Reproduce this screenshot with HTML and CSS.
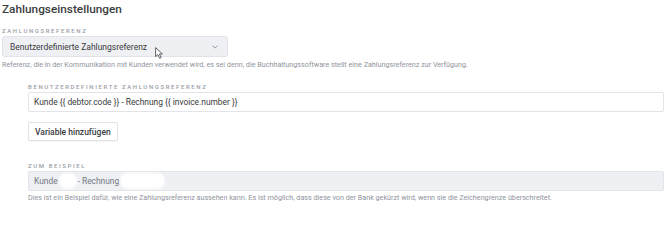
FILE: index.html
```html
<!DOCTYPE html>
<html lang="de">
<head>
<meta charset="utf-8">
<title>Zahlungseinstellungen</title>
<link rel="stylesheet" href="styles.css">
</head>
<body>
<div class="page">
  <h2 class="title">Zahlungseinstellungen</h2>

  <div class="label first">Zahlungsreferenz</div>
  <div class="select">
    <span>Benutzerdefinierte Zahlungsreferenz</span>
    <svg class="chevron" width="6" height="4" viewBox="0 0 6 4"><path d="M0.5 0.6 L3 3.1 L5.5 0.6" fill="none" stroke="#8c9097" stroke-width="0.9"/></svg>
    <svg class="cursor" width="9" height="12" viewBox="0 0 9 12"><path d="M0.6 0.6 L0.6 9.6 L2.8 7.6 L4.6 11.2 L6.1 10.5 L4.4 7 L7.4 7 Z" fill="#fff" stroke="#3a3a3a" stroke-width="0.8" stroke-linejoin="round"/></svg>
  </div>
  <p class="help">Referenz, die in der Kommunikation mit Kunden verwendet wird, es sei denn, die Buchhaltungssoftware stellt eine Zahlungsreferenz zur Verfügung.</p>

  <div class="sub">
    <div class="label second">Benutzerdefinierte Zahlungsreferenz</div>
    <div class="input">Kunde {{ debtor.code }} - Rechnung {{ invoice.number }}</div>
    <div class="actions"><button class="btn" type="button">Variable hinzufügen</button></div>

    <div class="label third">Zum Beispiel</div>
    <div class="input readonly">
      <span>Kunde</span><span class="blur short"></span><span>- Rechnung</span><span class="blur long"></span>
    </div>
    <p class="help tight">Dies ist ein Beispiel dafür, wie eine Zahlungsreferenz aussehen kann. Es ist möglich, dass diese von der Bank gekürzt wird, wenn sie die Zeichengrenze überschreitet.</p>
  </div>
</div>
</body>
</html>
```
FILE: styles.css
```css
html, body {
  margin: 0;
  padding: 0;
  background: #ffffff;
}
body {
  font-family: Roboto, "Liberation Sans", sans-serif;
  color: #3a3b3d;
}
.page {
  display: flex;
  flex-direction: column;
  padding: 1px 6px 0 2px;
}
.title {
  margin: 0;
  font-size: 11.8px;
  line-height: 16px;
  font-weight: 500;
  color: #3b3c3e;
}
.label {
  font-size: 6px;
  line-height: 8px;
  letter-spacing: 1.6px;
  text-transform: uppercase;
  color: #9a9ea6;
  font-weight: 500;
  margin-bottom: 1px;
}
.label.first { margin-top: 10px; }
.label.second { margin-top: 13px; }
.label.third { margin-top: 21px; }
.select {
  position: relative;
  width: 226px;
  height: 21px;
  box-sizing: border-box;
  border: 1px solid #e0e3e8;
  border-radius: 3px;
  background: #eef0f4;
  display: flex;
  align-items: center;
  justify-content: space-between;
  padding: 0 6px 0 7px;
  font-size: 8.5px;
  color: #3a3b3d;
}
.chevron { display: block; margin-right: 3px; }
.cursor {
  position: absolute;
  left: 152px;
  top: 10px;
}
.help {
  margin: 3px 0 0 0;
  font-size: 7.2px;
  line-height: 10px;
  color: #8f949c;
  white-space: nowrap;
}
.help.tight { margin-top: 2px; }
.sub {
  display: flex;
  flex-direction: column;
  margin-left: 26px;
}
.input {
  height: 20px;
  box-sizing: border-box;
  border: 1px solid #e1e4e9;
  border-radius: 2px;
  background: #ffffff;
  display: flex;
  align-items: center;
  padding: 0 5px;
  font-size: 8.4px;
  color: #3a3b3d;
}
.input.readonly {
  background: #eef0f4;
  color: #74787f;
}
.blur {
  display: inline-block;
  height: 16px;
  border-radius: 8px;
  background: #ffffff;
  filter: blur(1.2px);
}
.blur.short { width: 18px; margin: 0 1px 0 1px; }
.blur.long { width: 45px; margin-left: 1px; }
.actions {
  display: flex;
  margin-top: 10px;
}
.btn {
  height: 19px;
  box-sizing: border-box;
  padding: 0 6px;
  border: 1px solid #dfe2e7;
  border-radius: 2px;
  background: #ffffff;
  font-family: Roboto, "Liberation Sans", sans-serif;
  font-size: 8.5px;
  font-weight: 500;
  color: #3a3b3d;
  box-shadow: 0 1px 1px rgba(0,0,0,0.04);
}
```
